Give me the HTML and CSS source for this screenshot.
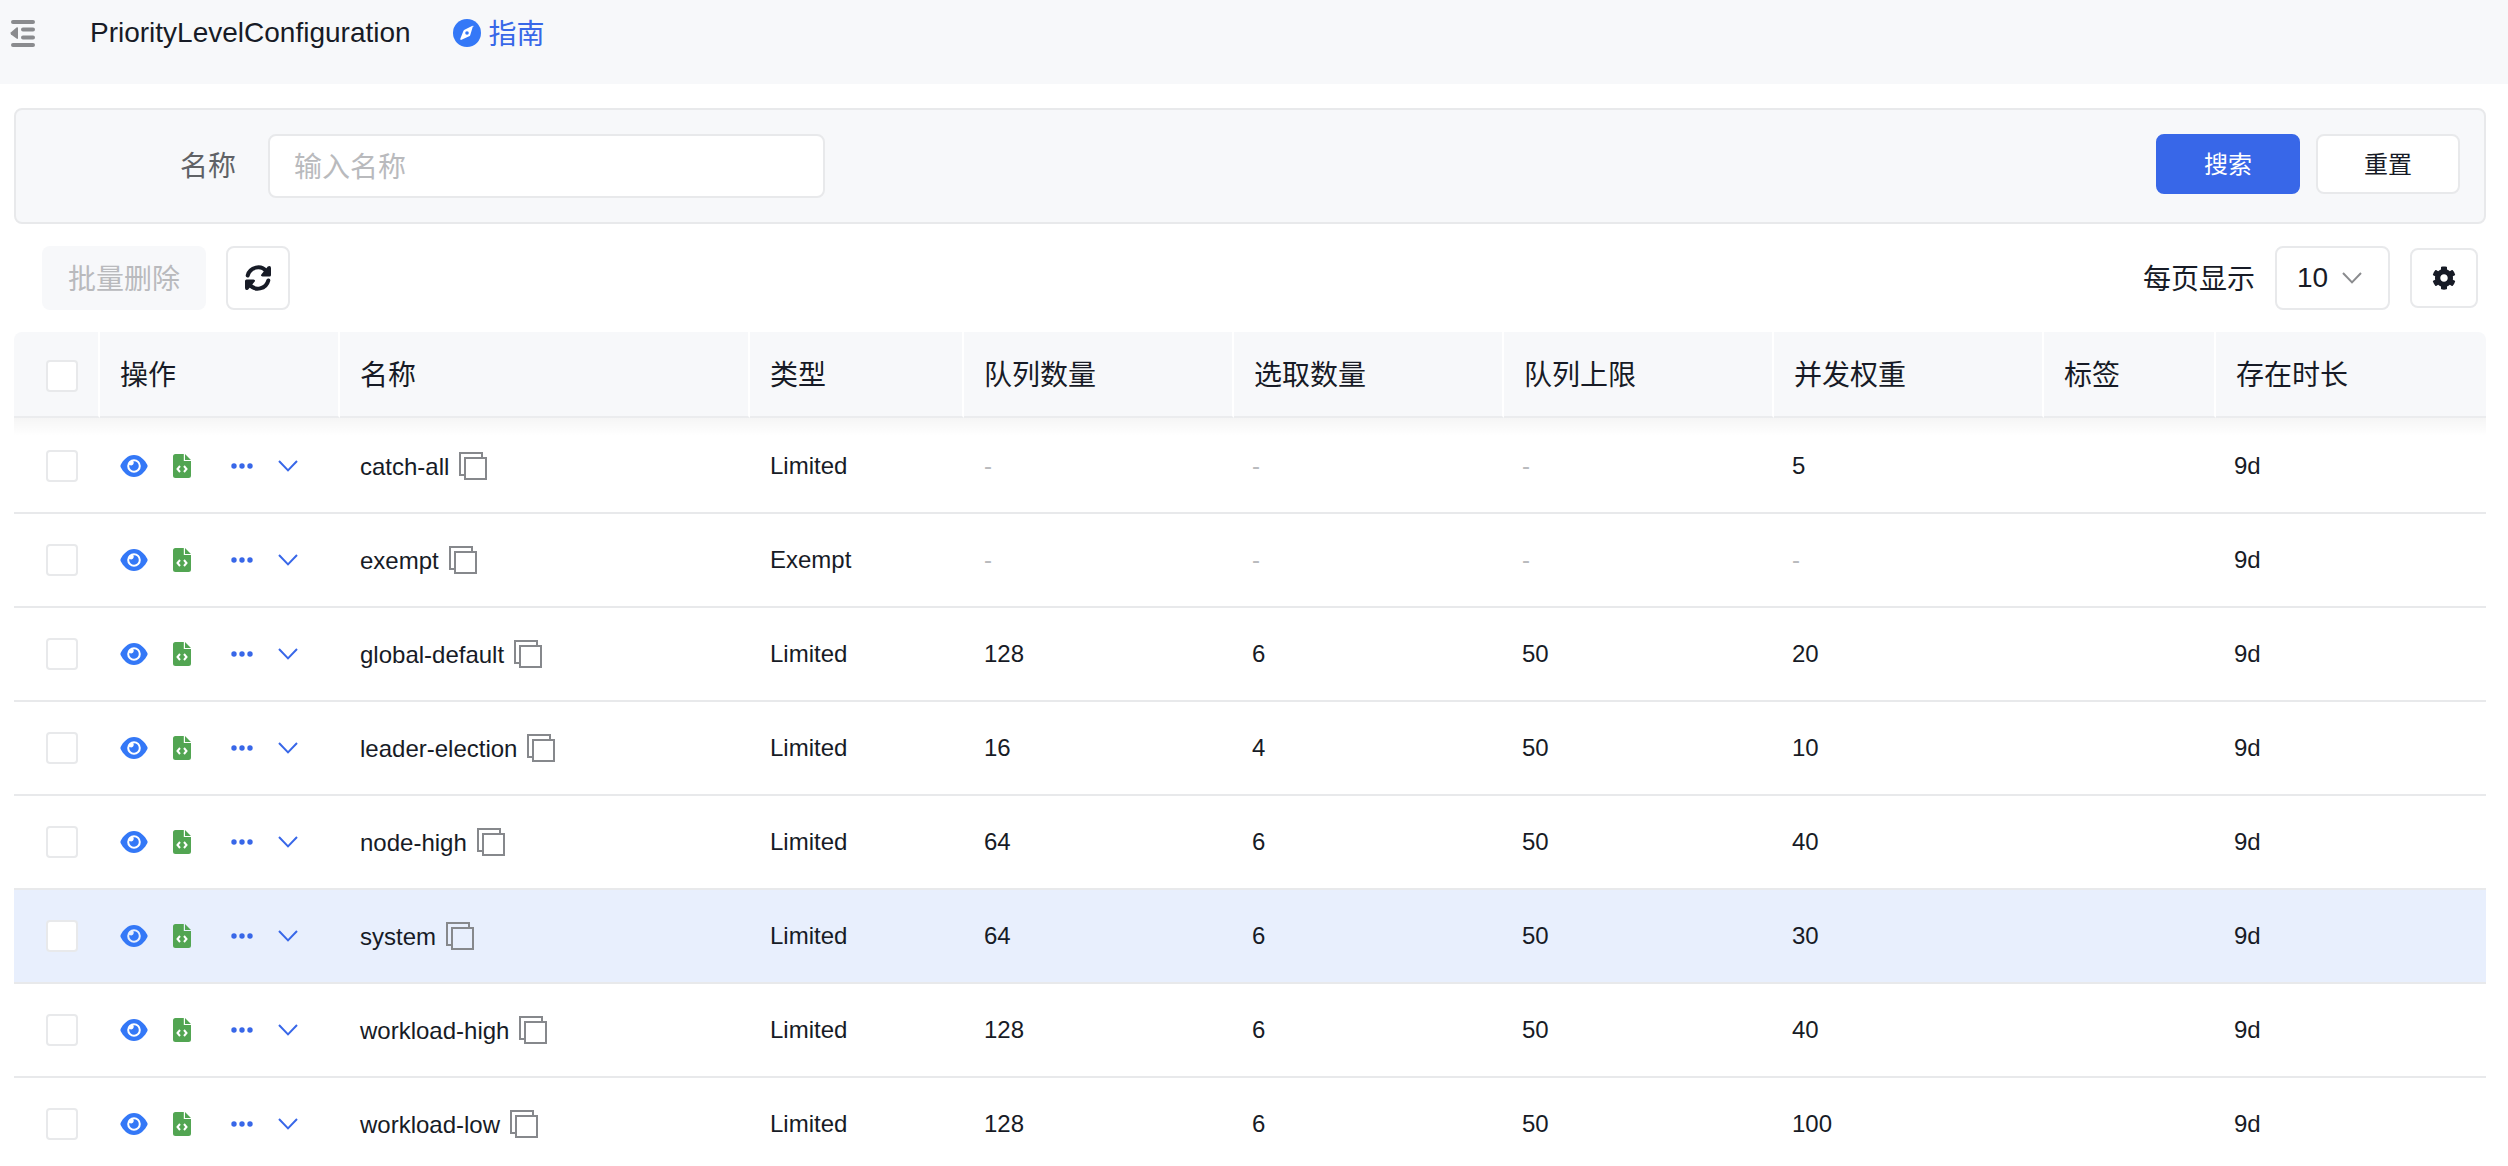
FILE: index.html
```html
<!DOCTYPE html>
<html lang="zh-CN">
<head>
<meta charset="utf-8">
<meta name="viewport" content="width=device-width, initial-scale=1">
<title>PriorityLevelConfiguration</title>
<link rel="stylesheet" href="styles.css">
</head>
<body>
<svg class="sprite" aria-hidden="true">
  <symbol id="i-eye" viewBox="0 0 28 24"><path fill-rule="evenodd" d="M14 1C20 1 25 6 27.400 11Q27.800 12 27.400 13C25 18 20 23 14 23S3 18 .6 13Q.2 12 .6 11C3 6 8 1 14 1ZM14 5.200A6.800 6.800 0 1 0 14 18.800A6.800 6.800 0 1 0 14 5.200Z"/><path d="M14 7.200A4.800 4.800 0 1 1 9.200 12.300C9.200 11.800 9.300 11.400 9.400 11.100C10 11.400 10.600 11.500 11.200 11.500A2.800 2.800 0 0 0 13.300 7.200Z"/></symbol>
  <symbol id="i-file" viewBox="0 0 18 24"><path fill-rule="evenodd" d="M2.500 0H10.800V7H18V21.500A2.500 2.500 0 0 1 15.500 24H2.500A2.500 2.500 0 0 1 0 21.500V2.500A2.500 2.500 0 0 1 2.500 0ZM12 0L18 6H12Z"/><path class="cut" d="M7 12L4.500 15L7 18M11 12L13.500 15L11 18"/></symbol>
  <symbol id="i-dots" viewBox="0 0 22 6"><circle cx="3" cy="3" r="2.700"/><circle cx="11" cy="3" r="2.700"/><circle cx="19" cy="3" r="2.700"/></symbol>
  <symbol id="i-down" viewBox="0 0 20 12"><path class="line" d="M1 1L10 10.400L19 1"/></symbol>
  <symbol id="i-copy" viewBox="0 0 28 28"><path class="line" d="M5 23H1V1H23V5"/><path class="line" d="M6 6H27V27H6Z"/></symbol>
</svg>

<header class="topbar">
  <button class="icon-btn fold" type="button" aria-label="收起菜单">
    <svg width="26" height="28" viewBox="0 0 26 28"><path class="bars" d="M3 3H23M13 10.500H23M13 18.500H23M3 26H23"/><path d="M1 13.200L6.500 8.600Q8 7.800 8 9.500V19Q8 20.500 6.500 19.600L1 15.500Q0 14.300 1 13.200Z"/></svg>
  </button>
  <h1 class="title">PriorityLevelConfiguration</h1>
  <a class="guide" href="#">
    <svg width="28" height="28" viewBox="0 0 28 28"><circle cx="14" cy="14" r="14"/><path class="needle" d="M20 7L17.200 16.200Q17 17 16.200 17.300L8.500 20.800Q7 21.200 7.300 19.800L10.500 11.800Q10.800 11 11.500 10.700L19 7Q21 6 20.700 8Z"/><circle cx="14" cy="14" r="1.800"/></svg>
    <span class="cjk">指南</span>
  </a>
</header>

<main class="page">
  <form class="search">
    <label class="search-label cjk" for="name">名称</label>
    <input class="search-input cjk" id="name" type="text" placeholder="输入名称">
    <div class="search-actions">
      <button class="btn primary" type="button">搜索</button>
      <button class="btn" type="reset">重置</button>
    </div>
  </form>

  <div class="toolbar">
    <button class="btn-batch cjk" type="button" disabled>批量删除</button>
    <button class="btn-square" type="button" aria-label="刷新">
      <svg width="28" height="28" viewBox="0 0 28 28"><path class="arc" d="M3.700 11.500A10.700 10.700 0 0 1 22.500 7.500M24.300 16.500A10.700 10.700 0 0 1 5.500 20.500"/><path d="M23.800 2.500Q26.800 1 27 4V11Q27 12.500 25.500 12.500H18.500Q16 12 17.500 10.200ZM4.200 25.500Q1.200 27 1 24V17Q1 15.500 2.500 15.500H9.500Q12 16 10.500 17.800Z"/></svg>
    </button>
    <label class="per-page cjk" for="size">每页显示</label>
    <div class="select">
      <select id="size"><option>10</option><option>20</option><option>50</option></select>
      <svg class="caret" width="20" height="12"><use href="#i-down"/></svg>
    </div>
    <button class="btn-square settings" type="button" aria-label="设置">
      <svg width="24" height="24" viewBox="0 0 512 512"><path d="M487.400 315.700l-42.600-24.600c4.300-23.200 4.300-47 0-70.200l42.600-24.600c4.900-2.800 7.100-8.600 5.500-14-11.100-35.600-30-67.800-54.700-94.600-3.800-4.100-10-5.100-14.800-2.300L380.800 110c-17.900-15.400-38.500-27.300-60.800-35.100V25.800c0-5.600-3.900-10.500-9.400-11.700-36.700-8.200-74.300-7.800-109.200 0-5.500 1.200-9.400 6.100-9.400 11.700V75c-22.200 7.900-42.800 19.800-60.800 35.100L88.700 85.500c-4.900-2.800-11-1.900-14.800 2.300-24.700 26.700-43.600 58.900-54.700 94.600-1.700 5.400.6 11.200 5.500 14L67.300 221c-4.300 23.200-4.300 47 0 70.200l-42.600 24.600c-4.900 2.800-7.100 8.600-5.500 14 11.100 35.600 30 67.800 54.700 94.600 3.800 4.100 10 5.100 14.800 2.300l42.600-24.600c17.900 15.400 38.500 27.300 60.800 35.100v49.200c0 5.600 3.900 10.500 9.400 11.700 36.700 8.200 74.300 7.800 109.200 0 5.500-1.200 9.400-6.100 9.400-11.700v-49.200c22.200-7.900 42.800-19.800 60.800-35.100l42.600 24.600c4.900 2.800 11 1.900 14.800-2.300 24.700-26.700 43.600-58.900 54.700-94.600 1.500-5.500-.7-11.300-5.600-14.100zM256 336c-44.100 0-80-35.900-80-80s35.900-80 80-80 80 35.900 80 80-35.900 80-80 80z"/></svg>
    </button>
  </div>

  <table class="grid">
    <colgroup><col class="c-check"><col class="c-ops"><col class="c-name"><col class="c-type"><col><col><col><col><col class="c-tag"><col></colgroup>
    <thead>
      <tr><th><input class="tick" type="checkbox" aria-label="全选"></th><th>操作</th><th>名称</th><th>类型</th><th>队列数量</th><th>选取数量</th><th>队列上限</th><th>并发权重</th><th>标签</th><th>存在时长</th></tr>
    </thead>
    <tbody>
      <tr>
        <td><input class="tick" type="checkbox" aria-label="catch-all"></td>
        <td><div class="ops"><button class="icon-btn eye" type="button" aria-label="查看"><svg width="28" height="24"><use href="#i-eye"/></svg></button><button class="icon-btn file" type="button" aria-label="编辑 YAML"><svg width="18" height="24"><use href="#i-file"/></svg></button><button class="icon-btn dots" type="button" aria-label="更多"><svg width="22" height="6"><use href="#i-dots"/></svg></button><button class="icon-btn down" type="button" aria-label="展开"><svg width="20" height="12"><use href="#i-down"/></svg></button></div></td>
        <td><div class="name"><span>catch-all</span><button class="icon-btn copy" type="button" aria-label="复制"><svg width="28" height="28"><use href="#i-copy"/></svg></button></div></td>
        <td>Limited</td><td class="none">-</td><td class="none">-</td><td class="none">-</td><td>5</td><td></td><td>9d</td>
      </tr>
      <tr>
        <td><input class="tick" type="checkbox" aria-label="exempt"></td>
        <td><div class="ops"><button class="icon-btn eye" type="button" aria-label="查看"><svg width="28" height="24"><use href="#i-eye"/></svg></button><button class="icon-btn file" type="button" aria-label="编辑 YAML"><svg width="18" height="24"><use href="#i-file"/></svg></button><button class="icon-btn dots" type="button" aria-label="更多"><svg width="22" height="6"><use href="#i-dots"/></svg></button><button class="icon-btn down" type="button" aria-label="展开"><svg width="20" height="12"><use href="#i-down"/></svg></button></div></td>
        <td><div class="name"><span>exempt</span><button class="icon-btn copy" type="button" aria-label="复制"><svg width="28" height="28"><use href="#i-copy"/></svg></button></div></td>
        <td>Exempt</td><td class="none">-</td><td class="none">-</td><td class="none">-</td><td class="none">-</td><td></td><td>9d</td>
      </tr>
      <tr>
        <td><input class="tick" type="checkbox" aria-label="global-default"></td>
        <td><div class="ops"><button class="icon-btn eye" type="button" aria-label="查看"><svg width="28" height="24"><use href="#i-eye"/></svg></button><button class="icon-btn file" type="button" aria-label="编辑 YAML"><svg width="18" height="24"><use href="#i-file"/></svg></button><button class="icon-btn dots" type="button" aria-label="更多"><svg width="22" height="6"><use href="#i-dots"/></svg></button><button class="icon-btn down" type="button" aria-label="展开"><svg width="20" height="12"><use href="#i-down"/></svg></button></div></td>
        <td><div class="name"><span>global-default</span><button class="icon-btn copy" type="button" aria-label="复制"><svg width="28" height="28"><use href="#i-copy"/></svg></button></div></td>
        <td>Limited</td><td>128</td><td>6</td><td>50</td><td>20</td><td></td><td>9d</td>
      </tr>
      <tr>
        <td><input class="tick" type="checkbox" aria-label="leader-election"></td>
        <td><div class="ops"><button class="icon-btn eye" type="button" aria-label="查看"><svg width="28" height="24"><use href="#i-eye"/></svg></button><button class="icon-btn file" type="button" aria-label="编辑 YAML"><svg width="18" height="24"><use href="#i-file"/></svg></button><button class="icon-btn dots" type="button" aria-label="更多"><svg width="22" height="6"><use href="#i-dots"/></svg></button><button class="icon-btn down" type="button" aria-label="展开"><svg width="20" height="12"><use href="#i-down"/></svg></button></div></td>
        <td><div class="name"><span>leader-election</span><button class="icon-btn copy" type="button" aria-label="复制"><svg width="28" height="28"><use href="#i-copy"/></svg></button></div></td>
        <td>Limited</td><td>16</td><td>4</td><td>50</td><td>10</td><td></td><td>9d</td>
      </tr>
      <tr>
        <td><input class="tick" type="checkbox" aria-label="node-high"></td>
        <td><div class="ops"><button class="icon-btn eye" type="button" aria-label="查看"><svg width="28" height="24"><use href="#i-eye"/></svg></button><button class="icon-btn file" type="button" aria-label="编辑 YAML"><svg width="18" height="24"><use href="#i-file"/></svg></button><button class="icon-btn dots" type="button" aria-label="更多"><svg width="22" height="6"><use href="#i-dots"/></svg></button><button class="icon-btn down" type="button" aria-label="展开"><svg width="20" height="12"><use href="#i-down"/></svg></button></div></td>
        <td><div class="name"><span>node-high</span><button class="icon-btn copy" type="button" aria-label="复制"><svg width="28" height="28"><use href="#i-copy"/></svg></button></div></td>
        <td>Limited</td><td>64</td><td>6</td><td>50</td><td>40</td><td></td><td>9d</td>
      </tr>
      <tr class="active">
        <td><input class="tick" type="checkbox" aria-label="system"></td>
        <td><div class="ops"><button class="icon-btn eye" type="button" aria-label="查看"><svg width="28" height="24"><use href="#i-eye"/></svg></button><button class="icon-btn file" type="button" aria-label="编辑 YAML"><svg width="18" height="24"><use href="#i-file"/></svg></button><button class="icon-btn dots" type="button" aria-label="更多"><svg width="22" height="6"><use href="#i-dots"/></svg></button><button class="icon-btn down" type="button" aria-label="展开"><svg width="20" height="12"><use href="#i-down"/></svg></button></div></td>
        <td><div class="name"><span>system</span><button class="icon-btn copy" type="button" aria-label="复制"><svg width="28" height="28"><use href="#i-copy"/></svg></button></div></td>
        <td>Limited</td><td>64</td><td>6</td><td>50</td><td>30</td><td></td><td>9d</td>
      </tr>
      <tr>
        <td><input class="tick" type="checkbox" aria-label="workload-high"></td>
        <td><div class="ops"><button class="icon-btn eye" type="button" aria-label="查看"><svg width="28" height="24"><use href="#i-eye"/></svg></button><button class="icon-btn file" type="button" aria-label="编辑 YAML"><svg width="18" height="24"><use href="#i-file"/></svg></button><button class="icon-btn dots" type="button" aria-label="更多"><svg width="22" height="6"><use href="#i-dots"/></svg></button><button class="icon-btn down" type="button" aria-label="展开"><svg width="20" height="12"><use href="#i-down"/></svg></button></div></td>
        <td><div class="name"><span>workload-high</span><button class="icon-btn copy" type="button" aria-label="复制"><svg width="28" height="28"><use href="#i-copy"/></svg></button></div></td>
        <td>Limited</td><td>128</td><td>6</td><td>50</td><td>40</td><td></td><td>9d</td>
      </tr>
      <tr>
        <td><input class="tick" type="checkbox" aria-label="workload-low"></td>
        <td><div class="ops"><button class="icon-btn eye" type="button" aria-label="查看"><svg width="28" height="24"><use href="#i-eye"/></svg></button><button class="icon-btn file" type="button" aria-label="编辑 YAML"><svg width="18" height="24"><use href="#i-file"/></svg></button><button class="icon-btn dots" type="button" aria-label="更多"><svg width="22" height="6"><use href="#i-dots"/></svg></button><button class="icon-btn down" type="button" aria-label="展开"><svg width="20" height="12"><use href="#i-down"/></svg></button></div></td>
        <td><div class="name"><span>workload-low</span><button class="icon-btn copy" type="button" aria-label="复制"><svg width="28" height="28"><use href="#i-copy"/></svg></button></div></td>
        <td>Limited</td><td>128</td><td>6</td><td>50</td><td>100</td><td></td><td>9d</td>
      </tr>
    </tbody>
  </table>
</main>
</body>
</html>
```

FILE: styles.css
```css
:root {
  --ink: #171b26;
  --line: #e8e9eb;
  --soft: #f7f8fa;
  --faint: #b9babd;
  --blue: #3867e8;
  --bright: #3478f7;
}

*,
*::before,
*::after {
  box-sizing: border-box;
}

body {
  display: flex;
  flex-direction: column;
  height: 100vh;
  margin: 0;
  overflow: hidden;
  background: #fff;
  color: var(--ink);
  font-family: "Liberation Sans", "Noto Sans CJK SC", sans-serif;
  font-size: 28px;
  line-height: 40px;
}

button,
input,
select {
  margin: 0;
  color: inherit;
  font: inherit;
}

svg {
  display: block;
  fill: currentColor;
}

.sprite {
  position: absolute;
  width: 0;
  height: 0;
}

.line {
  fill: none;
  stroke: currentColor;
  stroke-width: 2;
}

.icon-btn {
  flex: none;
  padding: 0;
  border: 0;
  background: none;
}

/* Top bar */
.topbar {
  display: flex;
  flex: none;
  align-items: center;
  height: 84px;
  padding: 0 10px 18px;
  background: var(--soft);
}

.fold {
  color: #8a8b8e;
}

.bars {
  fill: none;
  stroke: currentColor;
  stroke-width: 4;
  stroke-linecap: round;
}

.title {
  margin: 0 42px 0 54px;
  font-size: 28px;
  font-weight: 400;
}

.guide {
  display: flex;
  gap: 8px;
  align-items: center;
  color: var(--blue);
  text-decoration: none;
}

.guide svg {
  color: var(--bright);
}

.needle {
  fill: #fff;
}

/* Search panel */
.page {
  flex: 1;
  min-height: 0;
  padding: 24px 22px 0 14px;
  overflow: hidden;
}

.search {
  display: flex;
  align-items: flex-start;
  padding: 24px;
  border: 2px solid var(--line);
  border-radius: 8px;
  background: var(--soft);
}

.search-label {
  width: 196px;
  line-height: 60px;
  text-align: right;
  color: #606266;
}

.search-input {
  width: 557px;
  height: 64px;
  margin-left: 32px;
  padding: 0 24px;
  border: 2px solid var(--line);
  border-radius: 8px;
  background: #fff;
}

.search-input::placeholder {
  color: var(--faint);
}

.search-actions {
  display: flex;
  gap: 16px;
  margin-left: auto;
}

.btn {
  width: 144px;
  height: 60px;
  padding: 2px 0 0;
  border: 2px solid var(--line);
  border-radius: 8px;
  background: #fff;
  font-size: 24px;
}

.btn.primary {
  border-color: var(--blue);
  background: var(--blue);
  color: #fff;
}

/* Toolbar */
.toolbar {
  display: flex;
  align-items: center;
  margin: 22px 8px 22px 28px;
}

.btn-batch {
  height: 64px;
  margin-right: 20px;
  padding: 0 26px;
  border: 0;
  border-radius: 8px;
  background: var(--soft);
  color: var(--faint);
}

.btn-square {
  display: flex;
  align-items: center;
  justify-content: center;
  width: 64px;
  height: 64px;
  padding: 0;
  border: 2px solid var(--line);
  border-radius: 8px;
  background: #fff;
}

.btn-square.settings {
  width: 68px;
  height: 60px;
}

.arc {
  fill: none;
  stroke: currentColor;
  stroke-width: 4;
  stroke-linecap: round;
}

.per-page {
  margin: 0 20px 0 auto;
}

.select {
  position: relative;
  margin-right: 20px;
}

.select select {
  width: 115px;
  height: 64px;
  padding: 0 50px 0 20px;
  border: 2px solid var(--line);
  border-radius: 8px;
  background: #fff;
  appearance: none;
}

.caret {
  position: absolute;
  top: 26px;
  right: 28px;
  color: #8a8b8e;
  pointer-events: none;
}

/* Chinese labels sit slightly low in their line */
.cjk {
  padding-top: 3px;
}

/* Data table */
.grid {
  width: 100%;
  border-collapse: separate;
  border-spacing: 0;
  table-layout: fixed;
}

.c-check { width: 86px; }
.c-ops { width: 240px; }
.c-name { width: 410px; }
.c-type { width: 214px; }
.c-tag { width: 172px; }

.grid th {
  height: 86px;
  padding: 3px 20px 0;
  border-right: 2px solid #fff;
  border-bottom: 2px solid #ebecee;
  background: var(--soft);
  font-weight: 400;
  text-align: left;
}

.grid th:first-child {
  border-top-left-radius: 8px;
}

.grid th:last-child {
  border-right: 0;
  border-top-right-radius: 8px;
}

.grid td {
  height: 94px;
  padding: 0 18px;
  border-bottom: 2px solid var(--line);
  font-size: 24px;
}

.grid td:nth-child(-n + 5) {
  padding-left: 20px;
}

.grid th:first-child,
.grid td:first-child {
  padding-right: 0;
  padding-left: 32px;
}

.grid tbody tr:first-child td {
  height: 96px;
  padding-top: 2px;
  background: linear-gradient(rgba(0, 0, 0, 0.04), transparent 18px);
}

.grid .active td {
  background: #e8effd;
}

.grid .none {
  color: var(--faint);
}

.tick {
  display: block;
  width: 32px;
  height: 32px;
  border: 2px solid var(--line);
  border-radius: 4px;
  background: #fff;
  appearance: none;
}

.tick:checked {
  border-color: var(--blue);
  background: var(--blue);
}

.ops {
  display: flex;
  gap: 25px;
  align-items: center;
  color: var(--blue);
}

.eye {
  color: var(--bright);
}

.file {
  color: #52a552;
}

.cut {
  fill: none;
  stroke: #fff;
  stroke-width: 2;
}

.dots {
  margin-left: 15px;
}

.name {
  display: flex;
  gap: 10px;
  align-items: center;
}

.name span {
  padding-top: 2px;
}

.copy {
  color: #86888c;
}
```
